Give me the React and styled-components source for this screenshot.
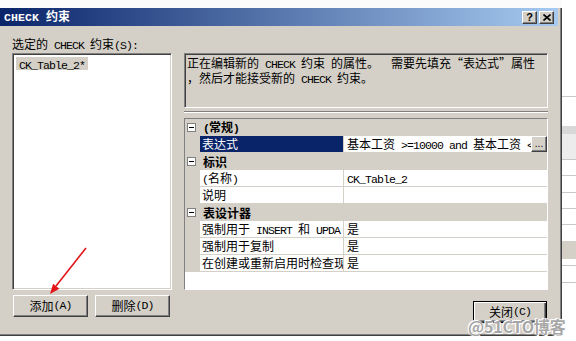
import React from "react";
import styled, { createGlobalStyle } from "styled-components";

const GlobalStyle = createGlobalStyle`
  html, body { margin: 0; padding: 0; background: #ffffff; }
  body {
    width: 576px; height: 341px; overflow: hidden;
    font-family: "Noto Sans CJK SC", "Noto Sans", sans-serif;
    font-size: 12px; color: #000;
  }
  * { box-sizing: border-box; }
`;

const Latin = styled.span`
  font-family: "Liberation Mono", "DejaVu Sans Mono", monospace;
  font-size: 11.5px;
  letter-spacing: ${(p) => (p.$wide ? "0.1px" : "-0.9px")};
  white-space: pre;
`;

function mix(text, wide) {
  return text.split(/([\x20-\x7e]+)/).map((part, i) =>
    i % 2 === 1 ? (
      <Latin key={i} $wide={wide}>
        {part}
      </Latin>
    ) : part ? (
      <React.Fragment key={i}>{part}</React.Fragment>
    ) : null
  );
}

const Screen = styled.div`
  position: relative;
  width: 576px;
  height: 341px;
  display: flex;
  background: #fff;
  overflow: hidden;
`;

const Dialog = styled.div`
  width: 562px;
  height: 336px;
  flex: none;
  display: flex;
  flex-direction: column;
  background: #d4d0c8;
  border-right: 1px solid #404040;
  border-bottom: 1px solid #404040;
  box-shadow: inset -1px -1px 0 #808080;
`;

const TopEdge = styled.div`
  height: 8px;
  margin-right: -1px;
  background: #fbfbfb;
`;

const TitleBar = styled.div`
  height: 18px;
  margin-right: 3px;
  display: flex;
  align-items: center;
  gap: 2px;
  padding: 0 4px 0 4px;
  background: linear-gradient(to right, #0a246a 0%, #a6caf0 100%);
  color: #fff;
  font-weight: 700;
`;

const TitleText = styled.div`
  flex: 1;
  line-height: 18px;
  white-space: nowrap;
`;

const CaptionButton = styled.div`
  width: 15px;
  height: 13px;
  display: flex;
  align-items: center;
  justify-content: center;
  background: #d4d0c8;
  border: 1px solid;
  border-color: #ffffff #404040 #404040 #ffffff;
  box-shadow: inset -1px -1px 0 #808080;
  color: #000;
  font-family: "Liberation Sans", sans-serif;
  font-size: 11px;
  font-weight: 700;
  line-height: 11px;
`;

const Body = styled.div`
  flex: 1;
  display: flex;
  gap: 12px;
  padding: 11px 0 0 12px;
`;

const LeftCol = styled.div`
  width: 160px;
  display: flex;
  flex-direction: column;
`;

const Label = styled.div`
  height: 14px;
  line-height: 14px;
  white-space: nowrap;
`;

const Sunken = styled.div`
  border: 1px solid;
  border-color: #808080 #ffffff #ffffff #808080;
  box-shadow: inset 1px 1px 0 #404040, inset -1px -1px 0 #d4d0c8;
`;

const ListBox = styled(Sunken)`
  margin-top: 2px;
  height: 237px;
  background: #fff;
  padding: 3px 3px;
  display: flex;
  flex-direction: column;
  align-items: flex-start;
`;

const ListItem = styled.div`
  background: #d4d0c8;
  padding: 0 3px 0 3px;
  line-height: 13px;
  height: 13px;
`;

const ButtonRow = styled.div`
  margin-top: ${(p) => (p.$right ? "11px" : "5px")};
  display: flex;
  gap: 7px;
  padding-left: 1px;
  justify-content: ${(p) => (p.$right ? "flex-end" : "flex-start")};
  padding-right: ${(p) => (p.$right ? "1px" : "0")};
`;

const Button = styled.div`
  width: ${(p) => (p.$default ? "74px" : "75px")};
  height: 22px;
  display: flex;
  align-items: center;
  justify-content: center;
  background: #d4d0c8;
  border: 1px solid;
  border-color: ${(p) =>
    p.$default ? "#000 #000 #000 #000" : "#ffffff #404040 #404040 #ffffff"};
  box-shadow: ${(p) =>
    p.$default
      ? "inset 1px 1px 0 #ffffff, inset -1px -1px 0 #404040, inset -2px -2px 0 #808080"
      : "inset -1px -1px 0 #808080"};
  line-height: 14px;
  white-space: nowrap;
`;

const RightCol = styled.div`
  width: 364px;
  display: flex;
  flex-direction: column;
  padding-top: 16px;
`;

const DescBox = styled(Sunken)`
  height: 55px;
  padding: 2px 2px;
  line-height: 13px;
  white-space: pre;
  overflow: hidden;
`;

const Divider = styled.div`
  margin-top: 3px;
  height: 2px;
  border-top: 1px solid #808080;
  border-bottom: 1px solid #ffffff;
`;

const Grid = styled.div`
  margin-top: 5px;
  height: 172px;
  background: #fff;
  border: 1px solid;
  border-color: #808080 #ffffff #ffffff #808080;
  display: flex;
  flex-direction: column;
  overflow: hidden;
`;

const CategoryRow = styled.div`
  height: 17px;
  flex: none;
  display: flex;
  align-items: center;
  background: #d4d0c8;
  font-weight: 700;
  line-height: 17px;
`;

const Gutter = styled.div`
  width: 15px;
  height: 17px;
  flex: none;
  display: flex;
  align-items: center;
  background: #d4d0c8;
`;

const ExpandBox = styled.div`
  margin-left: 2px;
  width: 9px;
  height: 9px;
  border: 1px solid #808080;
  background: #fff;
  display: flex;
  align-items: center;
  justify-content: center;
  &::after {
    content: "";
    width: 5px;
    height: 1px;
    background: #000;
  }
`;

const CategoryText = styled.div`
  padding-left: 3px;
  white-space: nowrap;
`;

const PropRow = styled.div`
  height: 17px;
  flex: none;
  display: flex;
`;

const NameCell = styled.div`
  width: 144px;
  flex: none;
  padding-left: 2px;
  border-right: 1px solid #d4d0c8;
  border-bottom: 1px solid #d4d0c8;
  background: ${(p) => (p.$selected ? "#0a246a" : "#fff")};
  color: ${(p) => (p.$selected ? "#fff" : "#000")};
  line-height: 16px;
  white-space: pre;
  overflow: hidden;
`;

const ValueCell = styled.div`
  flex: 1;
  min-width: 0;
  display: flex;
  border-bottom: 1px solid #d4d0c8;
  line-height: 16px;
`;

const ValueText = styled.div`
  flex: 1;
  min-width: 0;
  padding-left: 3px;
  white-space: pre;
  overflow: hidden;
`;

const EllipsisButton = styled.div`
  width: 16px;
  height: 16px;
  flex: none;
  background: #d4d0c8;
  border: 1px solid;
  border-color: #ffffff #404040 #404040 #ffffff;
  box-shadow: inset -1px -1px 0 #808080;
  display: flex;
  align-items: flex-end;
  justify-content: center;
  font-family: "Liberation Sans", sans-serif;
  font-size: 10px;
  line-height: 10px;
  padding-bottom: 2px;
`;

const Backdrop = styled.div`
  flex: 1;
  display: flex;
  flex-direction: column;
  background: #fff;
`;

const Stripe = styled.div`
  height: ${(p) => p.$h}px;
  flex: none;
  background: ${(p) => p.$bg || "#fff"};
  border-bottom: ${(p) => (p.$line ? "1px solid #c8c8c8" : "none")};
`;

const ArrowLayer = styled.svg`
  position: absolute;
  left: 0;
  top: 0;
  pointer-events: none;
`;

const Watermark = styled.div`
  position: absolute;
  left: 468px;
  top: 314px;
  font-family: "Noto Sans CJK SC", sans-serif;
  font-size: 16px;
  font-weight: 700;
  color: rgba(150, 150, 150, 0.85);
  letter-spacing: -0.2px;
  text-shadow: 0 0 2px #fff, 0 0 2px #fff, 1px 1px 0 #fff, -1px -1px 0 #fff;
  pointer-events: none;
  white-space: nowrap;
`;

const props = [
  { type: "cat", label: "(常规)" },
  { type: "prop", name: "表达式", value: "基本工资 >=10000 and 基本工资 <", selected: true, button: true },
  { type: "cat", label: "标识" },
  { type: "prop", name: "(名称)", value: "CK_Table_2" },
  { type: "prop", name: "说明", value: "" },
  { type: "cat", label: "表设计器" },
  { type: "prop", name: "强制用于 INSERT 和 UPDA", value: "是" },
  { type: "prop", name: "强制用于复制", value: "是" },
  { type: "prop", name: "在创建或重新启用时检查现", value: "是" },
];

const stripes = [
  { h: 97, line: true },
  { h: 29 },
  { h: 8, bg: "#d8d8d8" },
  { h: 26, bg: "#ececec", line: true },
  { h: 16, line: true },
  { h: 17, line: true },
  { h: 16, line: true },
  { h: 16, line: true },
  { h: 16 },
  { h: 18, bg: "#d4d0c8" },
  { h: 7, line: true },
  { h: 17, line: true },
  { h: 40 },
];

export default function App() {
  return (
    <>
      <GlobalStyle />
      <Screen>
        <Dialog>
          <TopEdge />
          <TitleBar>
            <TitleText>{mix("CHECK 约束", true)}</TitleText>
            <CaptionButton>?</CaptionButton>
            <CaptionButton>
              <svg width="8" height="7" viewBox="0 0 8 7">
                <path d="M0.5 0.5 L7.5 6.5 M7.5 0.5 L0.5 6.5" stroke="#000" strokeWidth="1.6" />
              </svg>
            </CaptionButton>
          </TitleBar>
          <Body>
            <LeftCol>
              <Label>{mix("选定的 CHECK 约束(S):")}</Label>
              <ListBox>
                <ListItem>{mix("CK_Table_2*")}</ListItem>
              </ListBox>
              <ButtonRow>
                <Button>{mix("添加(A)")}</Button>
                <Button>{mix("删除(D)")}</Button>
              </ButtonRow>
            </LeftCol>
            <RightCol>
              <DescBox>
                {mix("正在编辑新的 CHECK 约束 的属性。  需要先填充“表达式”属性")}
                {"\n"}
                {mix("，然后才能接受新的 CHECK 约束。")}
              </DescBox>
              <Divider />
              <Grid>
                {props.map((p, i) =>
                  p.type === "cat" ? (
                    <CategoryRow key={i}>
                      <Gutter>
                        <ExpandBox />
                      </Gutter>
                      <CategoryText>{mix(p.label)}</CategoryText>
                    </CategoryRow>
                  ) : (
                    <PropRow key={i}>
                      <Gutter />
                      <NameCell $selected={p.selected}>{mix(p.name)}</NameCell>
                      <ValueCell>
                        <ValueText>{mix(p.value)}</ValueText>
                        {p.button && <EllipsisButton>...</EllipsisButton>}
                      </ValueCell>
                    </PropRow>
                  )
                )}
              </Grid>
              <ButtonRow $right>
                <Button $default>{mix("关闭(C)")}</Button>
              </ButtonRow>
            </RightCol>
          </Body>
        </Dialog>
        <Backdrop>
          {stripes.map((s, i) => (
            <Stripe key={i} $h={s.h} $bg={s.bg} $line={s.line} />
          ))}
        </Backdrop>
        <ArrowLayer width="576" height="341" viewBox="0 0 576 341">
          <line x1="86" y1="248" x2="56" y2="286" stroke="#e3151b" strokeWidth="1.6" />
          <polygon points="50,294 59.4,288.7 53.1,283.7" fill="#e3151b" />
        </ArrowLayer>
        <Watermark>@51CTO博客</Watermark>
      </Screen>
    </>
  );
}
